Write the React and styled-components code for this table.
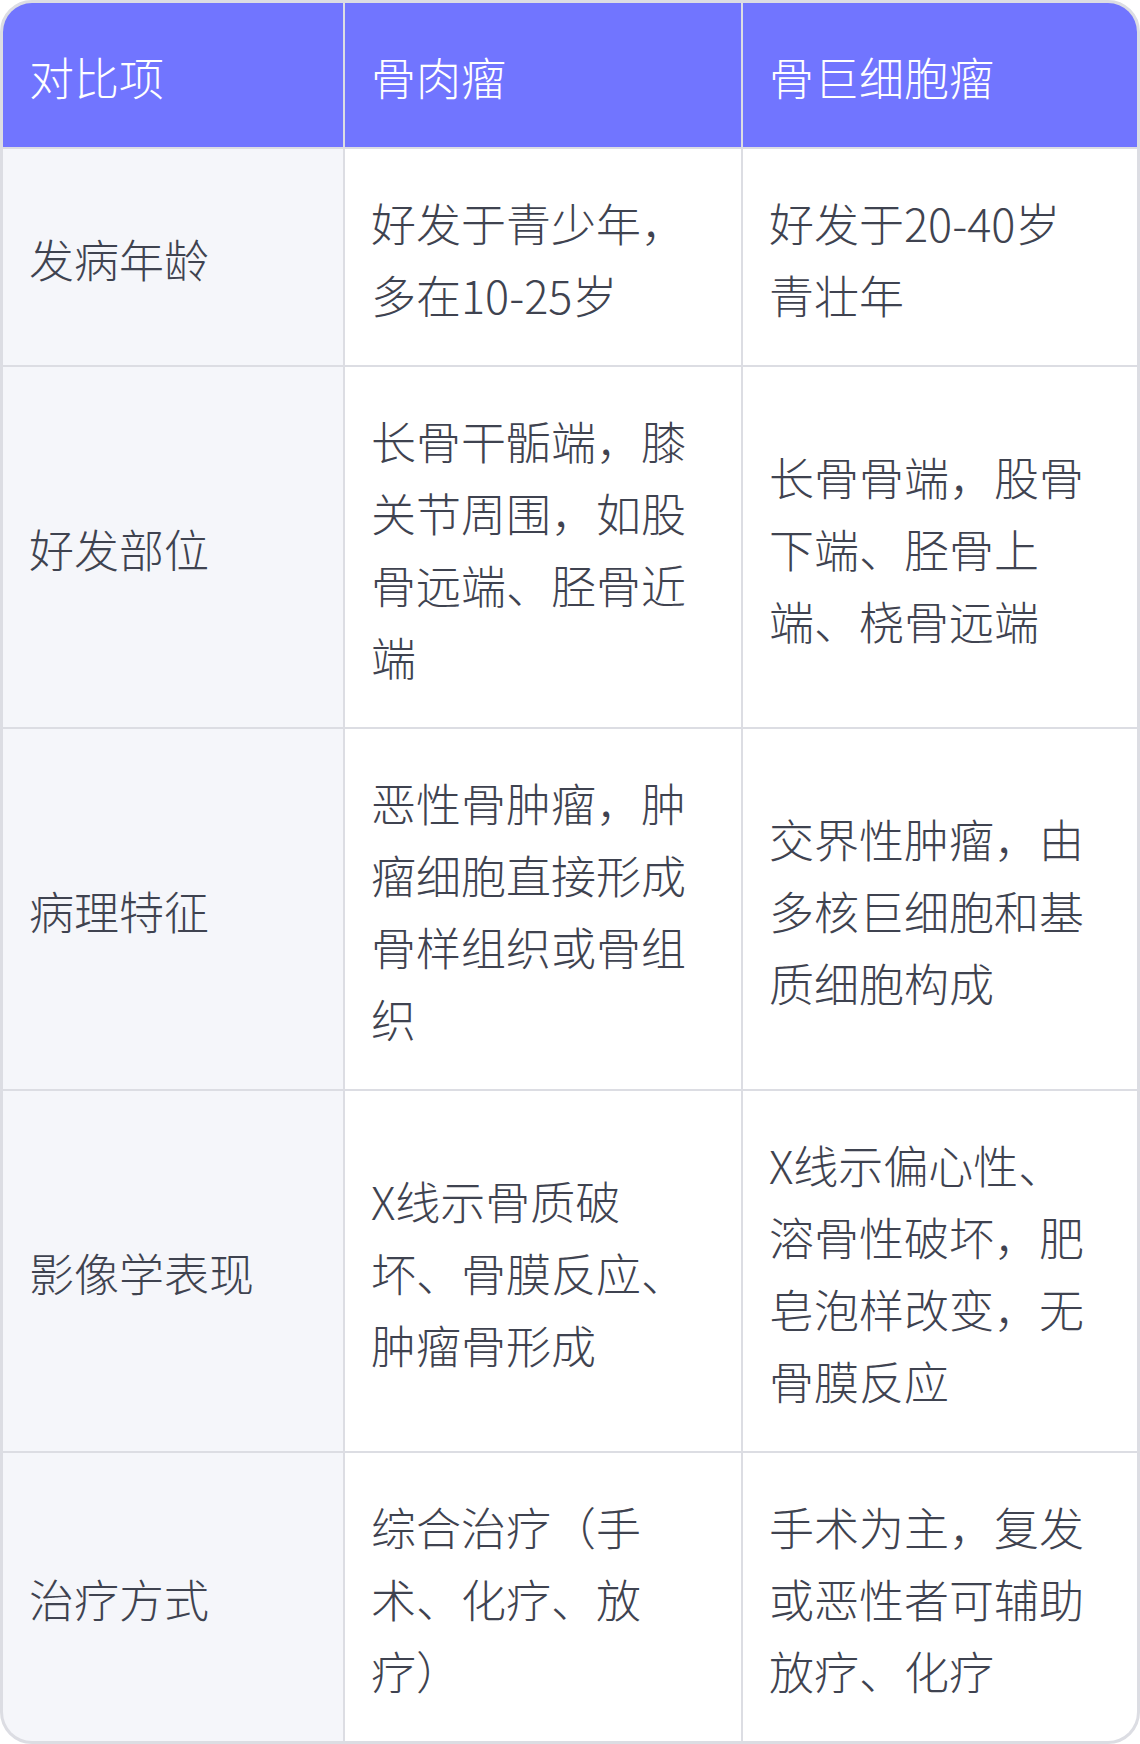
import React from "react";
import styled, { createGlobalStyle } from "styled-components";

const GlobalStyle = createGlobalStyle`
  html, body { margin: 0; padding: 0; background: #ffffff; }
  body { font-family: "Noto Sans CJK SC", "Noto Sans", sans-serif; }
`;

const TableFrame = styled.div`
  width: 1140px;
  box-sizing: border-box;
  border: 3px solid #dcdde3;
  border-radius: 32px;
  overflow: hidden;
  background: #dcdde3;
`;

const Grid = styled.div`
  display: grid;
  grid-template-columns: 340px 396px 1fr;
  gap: 2px;
`;

const Cell = styled.div`
  box-sizing: border-box;
  padding: 38px 34px 34px 26px;
  display: flex;
  align-items: center;
  font-size: 45px;
  line-height: 72px;
  font-weight: 300;
  color: ${(p) => (p.$head ? "#ffffff" : "#3f4350")};
  background: ${(p) => (p.$head ? "#7175ff" : p.$label ? "#f5f6fa" : "#ffffff")};
  word-break: break-all;
  line-break: strict;
  text-spacing-trim: space-all;
`;

const Text = styled.span`
  display: block;
`;

const headers = ["对比项", "骨肉瘤", "骨巨细胞瘤"];

const rows = [
  ["发病年龄", "好发于青少年，多在10-25岁", "好发于20-40岁青壮年"],
  ["好发部位", "长骨干骺端，膝关节周围，如股骨远端、胫骨近端", "长骨骨端，股骨下端、胫骨上端、桡骨远端"],
  ["病理特征", "恶性骨肿瘤，肿瘤细胞直接形成骨样组织或骨组织", "交界性肿瘤，由多核巨细胞和基质细胞构成"],
  ["影像学表现", "X线示骨质破坏、骨膜反应、肿瘤骨形成", "X线示偏心性、溶骨性破坏，肥皂泡样改变，无骨膜反应"],
  ["治疗方式", "综合治疗（手术、化疗、放疗）", "手术为主，复发或恶性者可辅助放疗、化疗"],
];

export default function App() {
  return (
    <>
      <GlobalStyle />
      <TableFrame>
        <Grid>
          {headers.map((h) => (
            <Cell key={h} $head>
              <Text>{h}</Text>
            </Cell>
          ))}
          {rows.map((r) =>
            r.map((c, i) => (
              <Cell key={r[0] + i} $label={i === 0}>
                <Text>{c}</Text>
              </Cell>
            ))
          )}
        </Grid>
      </TableFrame>
    </>
  );
}
